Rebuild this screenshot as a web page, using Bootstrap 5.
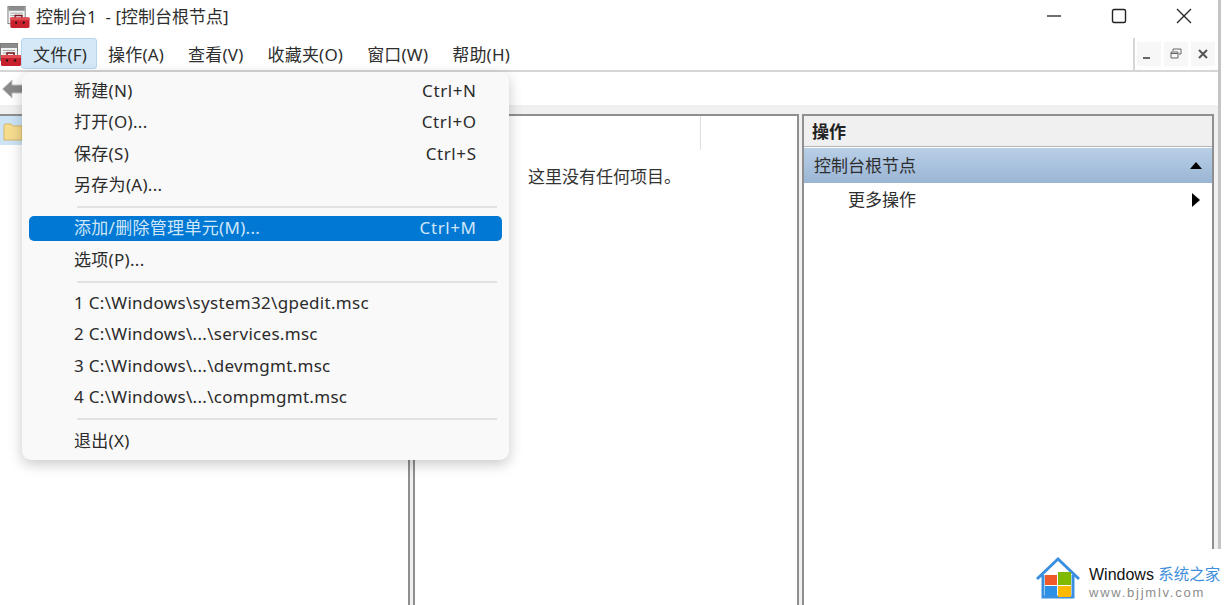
<!DOCTYPE html>
<html lang="zh-CN"><head><meta charset="utf-8">
<title>控制台1</title>
<link href="https://cdn.jsdelivr.net/npm/bootstrap@5.3.0/dist/css/bootstrap.min.css" rel="stylesheet">
<style>
html,body{height:605px;overflow:hidden;background:#fff}
body{font-family:"Noto Sans","Noto Sans CJK SC",sans-serif;font-size:17px;color:#2e2e2e;position:relative;line-height:1}
.app-win{width:1221px;height:605px;border-right:3px solid #c4c4c4}
.title-row{height:38px;padding:0 2px 6px 7px}
.title-txt{margin-left:6px;white-space:pre}
.win-ctl{width:65px;height:32px}
.menu-row{height:34px;border-bottom:2px solid #d6d6d6}
.menu-main{width:1135px;height:32px;border-right:2px solid #d6d6d6}
.menu-itm{height:31px;padding:0 11px;border:1px solid transparent;border-radius:3px;white-space:nowrap;line-height:31px;letter-spacing:.2px}
.menu-itm.is-open{width:76px;margin-right:-1px;background:#d5e8f7;border-color:#b8d6ee}
.mini-btn{width:24px;height:24px;background:#f7f7f7;margin-left:3px}
.mini-btn:first-child{margin-left:2px}
.tool-row{height:33px;padding-left:2px}
.gap-strip{height:9px;background:#f0f0f0}
.panes{flex:1;background:#f0f0f0}
.pane-a{width:410px;background:#fff;border-right:2px solid #8f8f8f;border-top:2px solid #8f8f8f}
.sel-row{height:29px;width:30px;background:#cde4f6;padding:5px 0 0 3px}
.pane-b{width:386px;margin-left:3px;background:#fff;border:2px solid #8f8f8f;border-bottom:0}
.col-rule{width:1px;height:34px;background:#dedede;margin-left:285px}
.empty-msg{padding:18px 0 0 113px;color:#333}
.pane-c{width:412px;margin-left:3px;background:#fff;border:2px solid #8f8f8f;border-bottom:0}
.act-head{height:31px;background:#f0f0f0;border-bottom:1px solid #b5b5b5;padding-left:8px;font-weight:700;line-height:32px;color:#222}
.act-group{height:35px;background:linear-gradient(#b9cfe7,#9ab5d4);padding:0 10px;margin-top:1px}
.act-item{height:33px;padding:0 12px 0 44px}
.tri-up{width:0;height:0;border-left:6.5px solid transparent;border-right:6.5px solid transparent;border-bottom:7px solid #000}
.tri-right{width:0;height:0;border-top:7px solid transparent;border-bottom:7px solid transparent;border-left:8px solid #000}
.file-menu{position:absolute;left:22px;top:72px;width:487px;height:388px;background:#f9f9f9;border-radius:9px;box-shadow:0 4px 14px rgba(0,0,0,.22);padding-top:4px;color:#2b2b2b}
.mitem{height:31.3px;padding:0 33px 2px 52px;white-space:nowrap;letter-spacing:.3px}
.mitem .keys{letter-spacing:.6px;margin-right:-.6px}
.mitem.mact{background:#0078d4;color:#cfe6f8;border-radius:5px;margin:0 7px;padding:0 26px 2px 45px;height:25px}
.msep{height:2px;background:#e2e2e2;margin:0 12px 0 55px}
.s1{margin-top:5px;margin-bottom:7.5px}.s2{margin-top:5.5px;margin-bottom:4.5px}.s3{margin-top:5px;margin-bottom:6px}
.wm{position:absolute;left:1033px;top:549px;width:192px;height:56px;background:#fff;padding:6px 0 0 2px}
.wm-a{font-family:"Liberation Sans","Noto Sans CJK SC",sans-serif;font-size:16px;color:#111;line-height:20px;margin-top:10px;white-space:nowrap}
.wm-a span{color:#3f8fdc;font-size:15.5px}
.wm-b{font-family:"Liberation Sans",sans-serif;font-size:13px;color:#8c8c8c;letter-spacing:1.75px;line-height:14px;margin-top:1px;white-space:nowrap}
</style></head>
<body>
<div class="app-win d-flex flex-column">
  <div class="title-row d-flex align-items-center">
    <svg width="23" height="23" viewBox="0 0 23 24"><rect x=".5" y="1.500" width="18" height="18" fill="#f2f2f2" stroke="#7d7d7d"/><rect x="1" y="2" width="17" height="4" fill="#8c8c8c"/><path d="M3 8.500h13M3 11h13M3 13.500h5" stroke="#a8a8a8"/><path d="M8 14v-3h7v3" fill="none" stroke="#7a1a20" stroke-width="1.500"/><rect x="3" y="13" width="20" height="11" rx="1.500" fill="#c8202c"/><rect x="3" y="13" width="20" height="3" fill="#e04a50"/><circle cx="9" cy="18.500" r="1.200" fill="#2a1a1a"/><circle cx="17" cy="18.500" r="1.200" fill="#2a1a1a"/></svg>
    <span class="title-txt">控制台1  - [控制台根节点]</span>
    <div class="ms-auto d-flex align-items-center">
      <div class="win-ctl d-flex align-items-center justify-content-center"><svg width="16" height="16"><path d="M1 8h14" stroke="#222" stroke-width="1.300"/></svg></div>
      <div class="win-ctl d-flex align-items-center justify-content-center"><svg width="16" height="16"><rect x="1.500" y="1.500" width="13" height="13" rx="1.500" fill="none" stroke="#222" stroke-width="1.400"/></svg></div>
      <div class="win-ctl d-flex align-items-center justify-content-center"><svg width="16" height="16"><path d="M1 1l14 14M15 1L1 15" stroke="#222" stroke-width="1.300"/></svg></div>
    </div>
  </div>
  <div class="menu-row d-flex">
    <div class="menu-main d-flex align-items-start">
      <svg width="21" height="24" viewBox="0 0 21 24" class="mt-1 flex-shrink-0"><rect x=".5" y="1.500" width="17" height="17" fill="#f2f2f2" stroke="#7d7d7d"/><rect x="1" y="2" width="16" height="4" fill="#8c8c8c"/><path d="M3 8.500h12M3 11h12" stroke="#a8a8a8"/><path d="M7 14v-3h7v3" fill="none" stroke="#7a1a20" stroke-width="1.500"/><rect x="1" y="13" width="20" height="11" rx="1.500" fill="#c8202c"/><rect x="1" y="13" width="20" height="3" fill="#e04a50"/><circle cx="7" cy="18.500" r="1.200" fill="#2a1a1a"/><circle cx="15" cy="18.500" r="1.200" fill="#2a1a1a"/></svg>
      <div class="menu-itm is-open">文件(F)</div>
      <div class="menu-itm">操作(A)</div>
      <div class="menu-itm">查看(V)</div>
      <div class="menu-itm">收藏夹(O)</div>
      <div class="menu-itm">窗口(W)</div>
      <div class="menu-itm">帮助(H)</div>
    </div>
    <div class="d-flex align-items-center">
      <div class="mini-btn d-flex align-items-center justify-content-center"><svg width="12" height="12"><path d="M0 10h7" stroke="#666" stroke-width="2"/></svg></div>
      <div class="mini-btn d-flex align-items-center justify-content-center"><svg width="12" height="12"><path d="M3 3V1h8v5H9M1 4h7v6H1zM1 5.500h7" fill="none" stroke="#666"/></svg></div>
      <div class="mini-btn d-flex align-items-center justify-content-center"><svg width="12" height="12"><path d="M2 2l8 8M10 2l-8 8" stroke="#555" stroke-width="2"/></svg></div>
    </div>
  </div>
  <div class="tool-row d-flex align-items-center"><svg width="22" height="22"><path d="M.5 11L10 2v5h11v8H10v5z" fill="#8a8a8a" stroke="#c4c4c4"/></svg></div>
  <div class="gap-strip"></div>
  <div class="panes d-flex">
    <div class="pane-a"><div class="sel-row"><svg width="20" height="19"><path d="M1 4l1-2h6l2 2h9v14H1z" fill="#f6dc8f" stroke="#d3b565"/></svg></div></div>
    <div class="pane-b"><div class="col-rule"></div><div class="empty-msg">这里没有任何项目。</div></div>
    <div class="pane-c">
      <div class="act-head">操作</div>
      <div class="act-group d-flex align-items-center justify-content-between"><span>控制台根节点</span><i class="tri-up"></i></div>
      <div class="act-item d-flex align-items-center justify-content-between"><span>更多操作</span><i class="tri-right"></i></div>
    </div>
  </div>
</div>
<div class="file-menu">
  <div class="mitem d-flex align-items-center justify-content-between"><span>新建(N)</span><span class="keys">Ctrl+N</span></div>
  <div class="mitem d-flex align-items-center justify-content-between"><span>打开(O)...</span><span class="keys">Ctrl+O</span></div>
  <div class="mitem d-flex align-items-center justify-content-between"><span>保存(S)</span><span class="keys">Ctrl+S</span></div>
  <div class="mitem d-flex align-items-center"><span>另存为(A)...</span></div>
  <div class="msep s1"></div>
  <div class="mitem mact d-flex align-items-center justify-content-between"><span>添加/删除管理单元(M)...</span><span class="keys">Ctrl+M</span></div>
  <div class="mitem d-flex align-items-center mt-1"><span>选项(P)...</span></div>
  <div class="msep s2"></div>
  <div class="mitem d-flex align-items-center"><span>1 C:\Windows\system32\gpedit.msc</span></div>
  <div class="mitem d-flex align-items-center"><span>2 C:\Windows\...\services.msc</span></div>
  <div class="mitem d-flex align-items-center"><span>3 C:\Windows\...\devmgmt.msc</span></div>
  <div class="mitem d-flex align-items-center"><span>4 C:\Windows\...\compmgmt.msc</span></div>
  <div class="msep s3"></div>
  <div class="mitem d-flex align-items-center"><span>退出(X)</span></div>
</div>
<div class="wm d-flex">
  <svg width="46" height="46" viewBox="0 0 46 46" class="flex-shrink-0"><path d="M2 24L23 4l21 20M8 20v22h30V20" fill="none" stroke="#3a8fe0" stroke-width="3"/><rect x="10" y="20" width="12" height="10" fill="#f05a28"/><rect x="23" y="17" width="13" height="13" fill="#7fba00"/><rect x="10" y="31" width="12" height="10" fill="#2d8fe6"/><rect x="23" y="31" width="13" height="11" fill="#ffb900"/></svg>
  <div class="ms-2"><div class="wm-a">Windows <span>系统之家</span></div><div class="wm-b">www.bjjmlv.com</div></div>
</div>
</body></html>
